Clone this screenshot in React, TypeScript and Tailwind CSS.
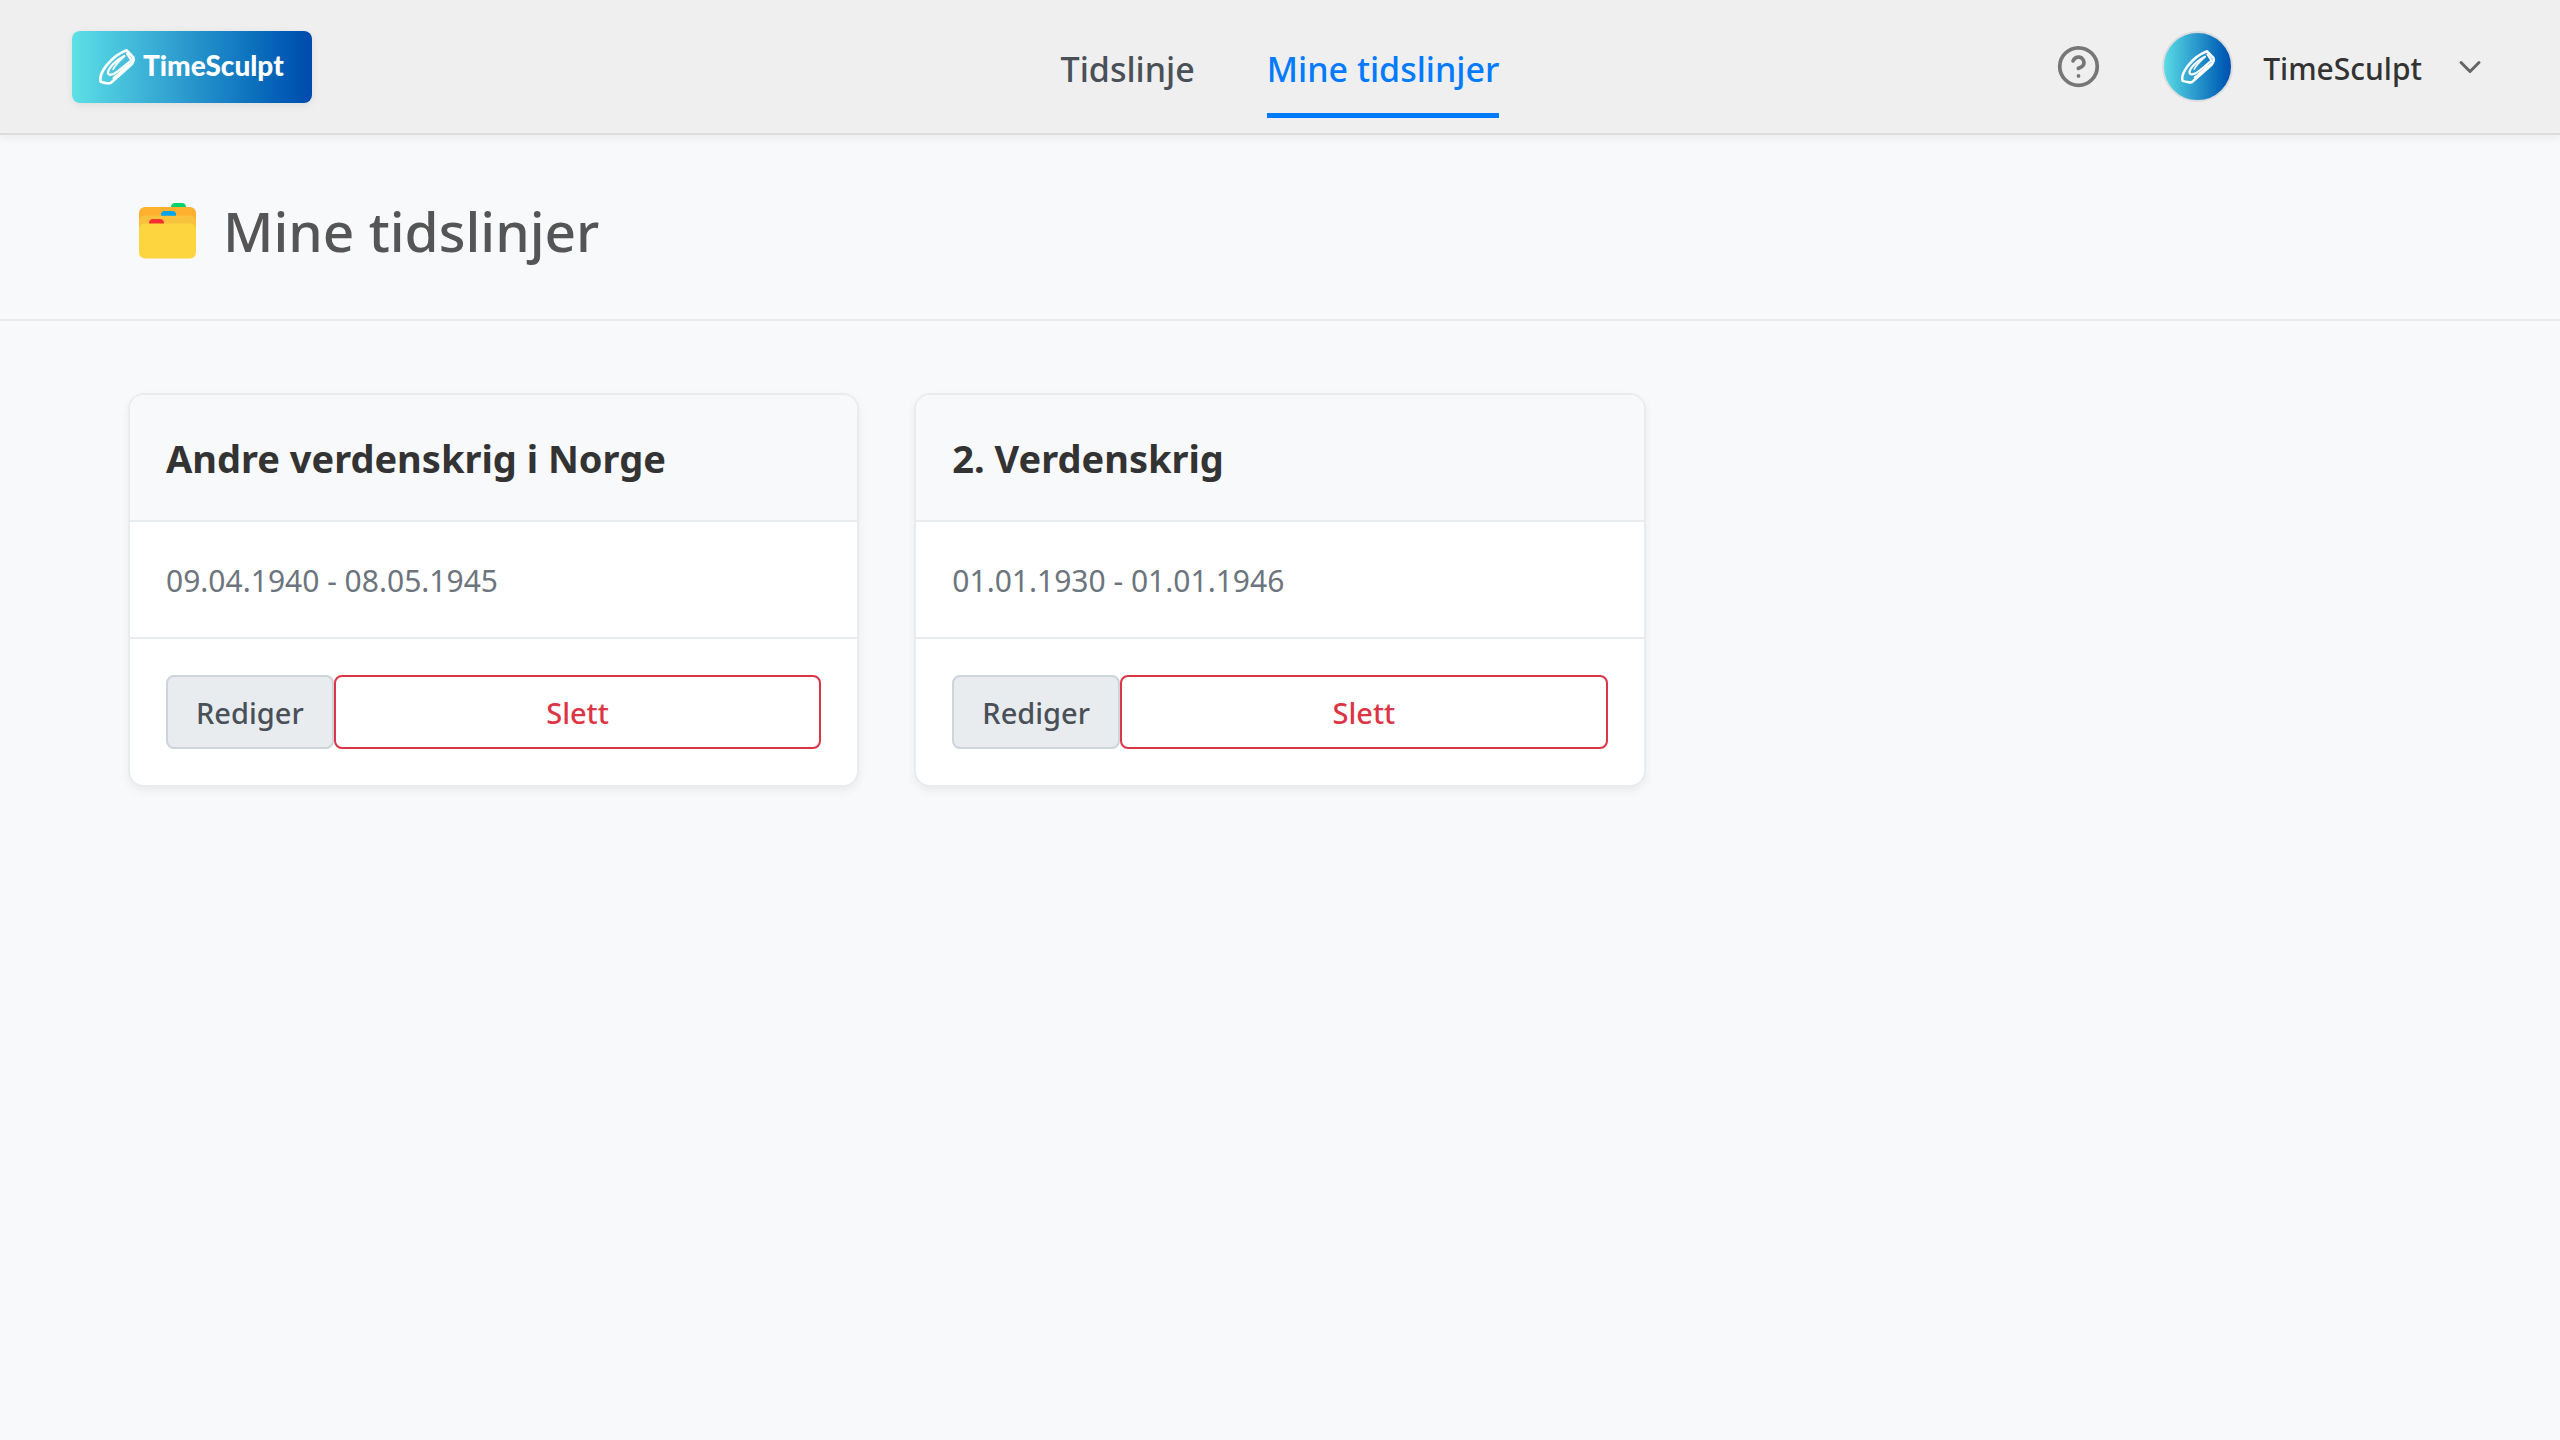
type Timeline = { id: number; title: string; period: string };

const timelines: Timeline[] = [
  { id: 1, title: 'Andre verdenskrig i Norge', period: '09.04.1940 - 08.05.1945' },
  { id: 2, title: '2. Verdenskrig', period: '01.01.1930 - 01.01.1946' },
];

function Paperclip({ className }: { className: string }) {
  return (
    <svg viewBox="0 0 108 108" className={className} fill="none" stroke="#fff" strokeLinejoin="round" strokeLinecap="round" aria-hidden="true">
      <path strokeWidth="8" d="M5 98 C1 84 8 68 22 50 C40 28 60 12 83 4 L103 25 L104 34 L98 46 L36 101 C32 105 24 103 5 98 Z" />
      <path strokeWidth="7" d="M76 21 C50 34 30 56 27 69 C26 78 34 79 44 75 C60 67 74 52 97 34" />
      <path strokeWidth="5" d="M76 22 C62 35 48 48 42 61" />
      <path strokeWidth="7" d="M84 14 L95 30 M99 43 C82 52 62 74 44 87" />
    </svg>
  );
}

function FolderIcon() {
  return (
    <svg viewBox="0 0 57 56" className="h-14 w-[57px]" aria-hidden="true">
      <path fill="#00d26a" d="M32 6 V3.500 Q32.500 0 36 0 H43 Q46.500 0 47 3.500 V6 Z" />
      <rect y="4" width="57" height="40" rx="6" fill="#ffb02e" />
      <path fill="#00a6ed" d="M22 13 V11.500 Q22.500 8 26 8 H33 Q36.500 8 37 11.500 V13 Z" />
      <rect y="12.500" width="57" height="36" rx="6" fill="#f9c23c" />
      <path fill="#00a6ed" d="M22 12.500 V11.500 Q22.500 8 26 8 H33 Q36.500 8 37 11.500 V12.500 Z" />
      <path fill="#f92f2f" d="M10 22 V19.500 Q10.500 16 14 16 H21 Q24.500 16 25 19.500 V22 Z" />
      <rect y="20.500" width="57" height="35" rx="6" fill="#fdd53f" />
    </svg>
  );
}

function Header() {
  return (
    <header className="relative grid h-[135px] grid-cols-[1fr_auto_1fr] items-center border-b-2 border-[#dcdcdc] bg-[#efefef] px-[72px] shadow-[0_3px_8px_rgba(0,0,0,0.06)]">
      <a
        href="#"
        className="flex h-[72px] w-60 items-center gap-2 rounded-lg bg-linear-to-r from-[#5de0e6] to-[#004aad] pl-[27px] shadow-[0_2px_8px_rgba(0,0,0,0.08)]"
      >
        <Paperclip className="size-9" />
        <span className="pb-1 font-['Lato',sans-serif] text-[28px] leading-9 font-black text-white">TimeSculpt</span>
      </a>

      <nav className="flex gap-[72px] text-[34px] leading-[88px] font-medium">
        <a href="#" className="border-y-5 border-transparent pt-1 text-[#495057]">
          Tidslinje
        </a>
        <a href="#" aria-current="page" className="border-y-5 border-t-transparent border-b-[#007bff] pt-1 text-[#007bff]">
          Mine tidslinjer
        </a>
      </nav>

      <div className="flex items-center justify-end gap-[61px]">
        <button type="button" aria-label="Hjelp">
          <svg viewBox="0 0 24 24" className="size-[45px]" fill="none" stroke="#777" strokeWidth="2" strokeLinecap="round" strokeLinejoin="round">
            <circle cx="12" cy="12" r="10" />
            <path d="M9.090 9a3 3 0 0 1 5.830 1c0 2-3 3-3 3" />
            <path d="M12 17h.010" />
          </svg>
        </button>
        <button type="button" className="flex items-center gap-[30px]">
          <span className="flex size-[71px] items-center justify-center rounded-full border-2 border-[#ddd] bg-linear-to-r from-[#5de0e6] to-[#004aad] bg-origin-border">
            <Paperclip className="size-[34px]" />
          </span>
          <span className="pt-1 text-[30px] leading-10 font-medium text-[#333]">TimeSculpt</span>
          <svg viewBox="0 0 24 24" className="size-9" fill="none" stroke="#666" strokeWidth="2" strokeLinecap="round" strokeLinejoin="round" aria-hidden="true">
            <path d="m6 9 6 6 6-6" />
          </svg>
        </button>
      </div>
    </header>
  );
}

function TimelineCard({ title, period }: Timeline) {
  return (
    <article className="overflow-hidden rounded-2xl border-2 border-[#e9ecef] bg-white shadow-[0_4px_10px_rgba(0,0,0,0.06)]">
      <h2 className="border-b-2 border-[#e9ecef] bg-[#f8f9fb] px-9 pt-[37px] pb-[35px] text-[38px] leading-[53px] font-bold text-[#333]">
        {title}
      </h2>
      <p className="border-b-2 border-[#e9ecef] px-9 pt-[37px] pb-[35px] text-[30px] leading-[43px] text-[#6c757d]">{period}</p>
      <div className="flex p-9 text-[29px] leading-[68px] font-medium">
        <button type="button" className="rounded-lg border-2 border-[#ced4da] bg-[#e9ecef] px-7 pt-0.5 text-[#495057]">
          Rediger
        </button>
        <button type="button" className="flex-1 rounded-lg border-2 border-[#dc3545] bg-white pt-0.5 text-[#dc3545]">
          Slett
        </button>
      </div>
    </article>
  );
}

export default function App() {
  return (
    <div className="min-h-screen bg-[#f8f9fb] font-['Noto_Sans',sans-serif]">
      <Header />
      <main>
        <div className="flex items-center gap-[27px] border-b-2 border-[#e8eaec] px-[139px] pt-[60px] pb-[52px]">
          <FolderIcon />
          <h1 className="text-[55px] leading-[72px] font-medium text-[#555]">Mine tidslinjer</h1>
        </div>
        <section className="grid grid-cols-3 gap-[55px] px-32 py-[72px]">
          {timelines.map((t) => (
            <TimelineCard key={t.id} {...t} />
          ))}
        </section>
      </main>
    </div>
  );
}
